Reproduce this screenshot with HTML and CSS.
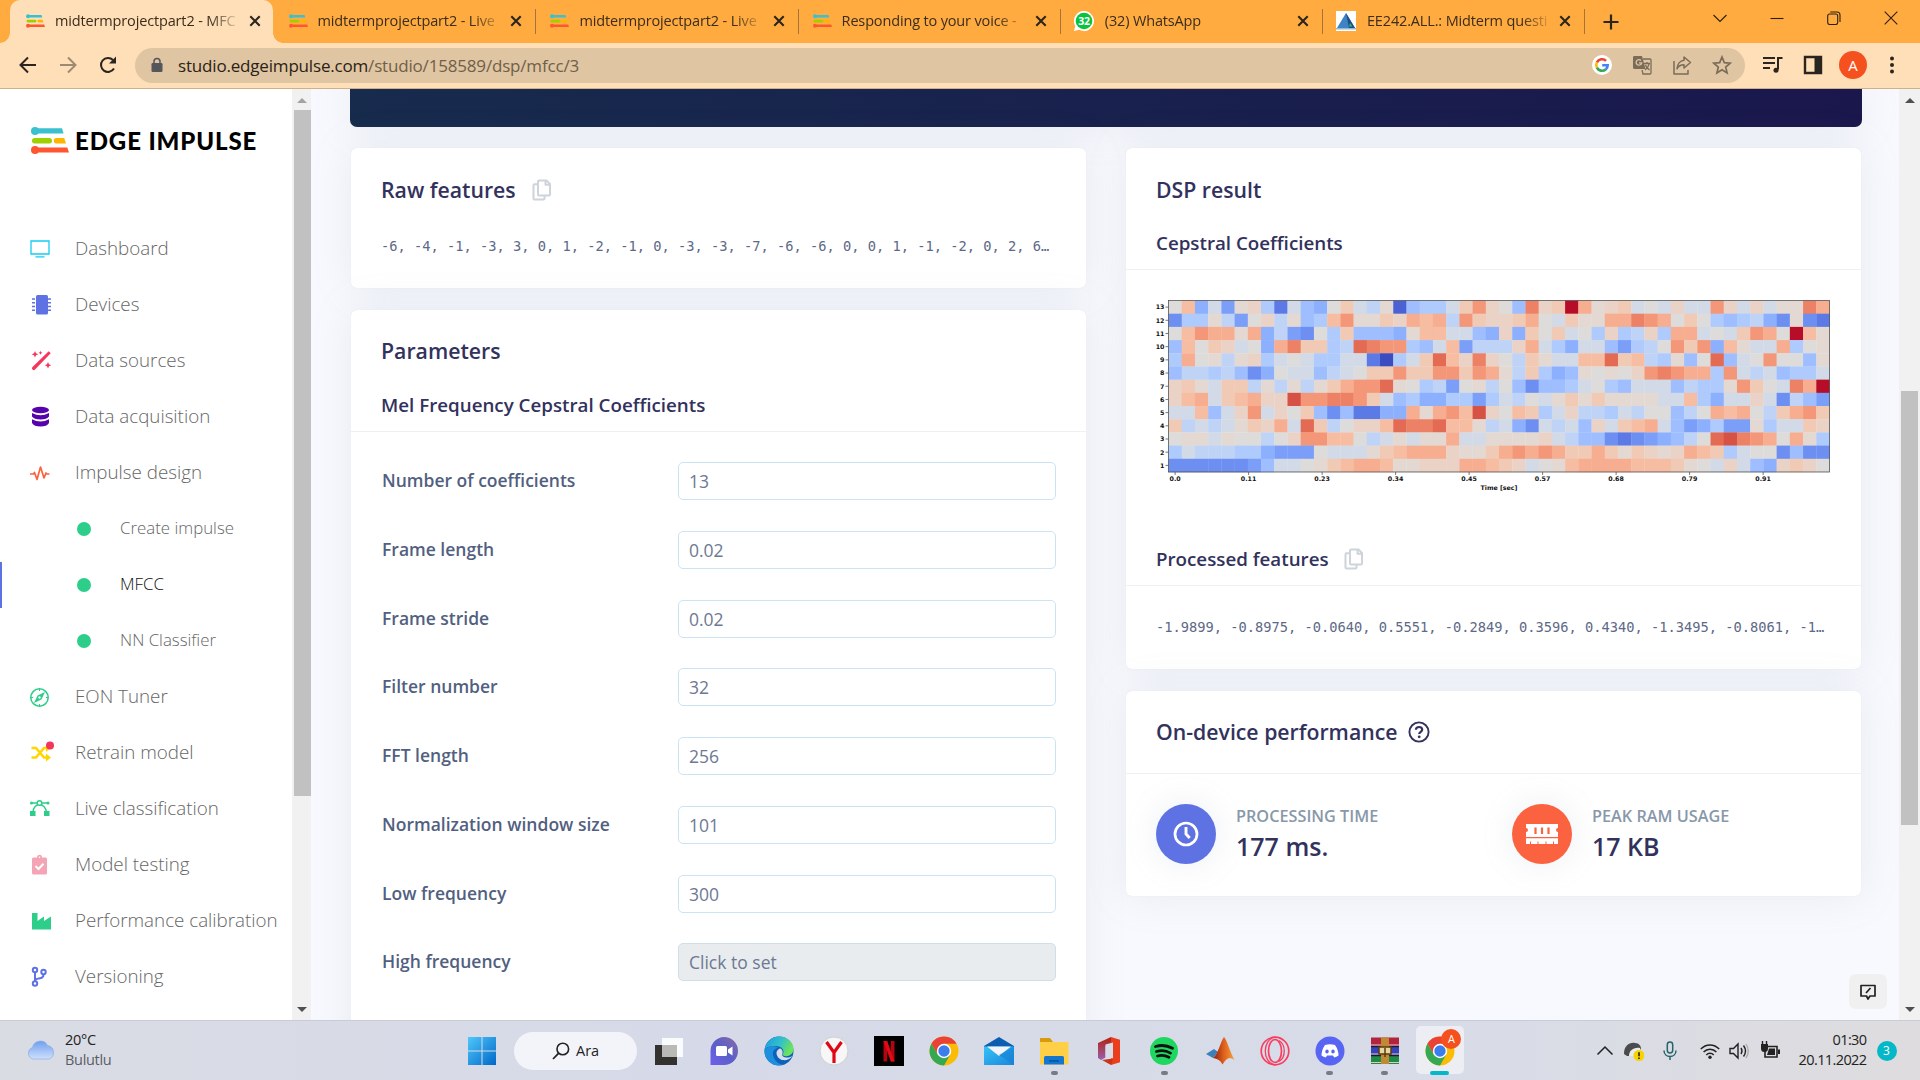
FILE: index.html
```html
<!DOCTYPE html>
<html lang="en">
<head>
<meta charset="utf-8">
<title>midtermprojectpart2 - MFCC</title>
<link rel="stylesheet" href="styles.css">
</head>
<body>
<svg class="defs" aria-hidden="true">
  <defs>
    <linearGradient id="gWin" x1="0" y1="0" x2="1" y2="1"><stop offset="0" stop-color="#4fc8fb"/><stop offset="1" stop-color="#0067c8"/></linearGradient>
    <linearGradient id="gCloud" x1="0" y1="0" x2="0" y2="1"><stop offset="0" stop-color="#6f9ff0"/><stop offset="1" stop-color="#cfe0fb"/></linearGradient>
    <linearGradient id="gTeams" x1="1" y1="0" x2="0" y2="1"><stop offset="0" stop-color="#8a6aa8"/><stop offset=".5" stop-color="#5b5fc7"/><stop offset="1" stop-color="#6f5ff0"/></linearGradient>
    <linearGradient id="gEdge" x1="0" y1="0" x2="1" y2=".4"><stop offset="0" stop-color="#1a9be0"/><stop offset=".6" stop-color="#35c1c9"/><stop offset="1" stop-color="#6be35a"/></linearGradient>
    <linearGradient id="gMat" x1="0" y1="0" x2="1" y2="0"><stop offset="0" stop-color="#8a1f0c"/><stop offset=".5" stop-color="#e0601c"/><stop offset="1" stop-color="#f3a33a"/></linearGradient>
    <linearGradient id="gMail" x1="0" y1="0" x2="1" y2="1"><stop offset="0" stop-color="#35c3f5"/><stop offset="1" stop-color="#1a86dd"/></linearGradient>
    <linearGradient id="gOff" x1="0" y1="0" x2="0" y2="1"><stop offset="0" stop-color="#b3210c"/><stop offset="1" stop-color="#9a5fae"/></linearGradient>
  </defs>
  <symbol id="ei" viewBox="0 0 38 27">
    <path fill="#3ac0cf" d="M4 1.300h27l1.600 5.300H4z"/><circle fill="#3ac0cf" cx="4" cy="4" r="4"/>
    <rect fill="#9fd000" x="1" y="11" width="20" height="5.400" rx="2.700"/><path fill="#ffb400" d="M25.500 11h7.700l1.800 5.400h-9.500a2.700 2.700 0 0 1 0-5.400z"/>
    <path fill="#ff5630" d="M4 20.400h32.300l1.700 5H4z"/><circle fill="#ff5630" cx="4" cy="23" r="4"/>
  </symbol>
  <symbol id="x" viewBox="0 0 12 12"><path d="M1.300 1.300l9.400 9.400M10.700 1.300l-9.400 9.400" stroke="#2b2520" stroke-width="2.100"/></symbol>
  <symbol id="copy" viewBox="0 0 20 22"><path fill="none" stroke="#ced4da" stroke-width="2" stroke-linejoin="round" d="M7 1.500h7.500L18 5v10.500a1 1 0 0 1-1 1H7a1 1 0 0 1-1-1v-13a1 1 0 0 1 1-1zM13.500 1.500v4.300H18M6 5.200H2.500a1 1 0 0 0-1 1v13.300a1 1 0 0 0 1 1h9a1 1 0 0 0 1-1v-3"/></symbol>
  <symbol id="chrome" viewBox="0 0 30 30"><circle cx="15" cy="15" r="14.500" fill="#fbbc05"/><path fill="#ea4335" d="M2.400 7.800A14.500 14.500 0 0 1 27.600 7.800H15l-6.300 10.800z"/><path fill="#34a853" d="M2.400 7.800L8.700 18.600 15 22l6.300-3.400L15 29.500A14.500 14.500 0 0 1 2.400 7.800z"/><circle cx="15" cy="15" r="7.200" fill="#fff"/><circle cx="15" cy="15" r="5.700" fill="#3b7ded"/></symbol>
</svg>

<header class="tabs">
  <div class="tab active"><svg class="fav"><use href="#ei"/></svg><span class="ttl">midtermprojectpart2 - MFC</span><svg class="cls"><use href="#x"/></svg></div>
  <div class="tab"><svg class="fav"><use href="#ei"/></svg><span class="ttl">midtermprojectpart2 - Live</span><svg class="cls"><use href="#x"/></svg></div>
  <div class="tab sep"><svg class="fav"><use href="#ei"/></svg><span class="ttl">midtermprojectpart2 - Live</span><svg class="cls"><use href="#x"/></svg></div>
  <div class="tab sep"><svg class="fav"><use href="#ei"/></svg><span class="ttl">Responding to your voice -</span><svg class="cls"><use href="#x"/></svg></div>
  <div class="tab sep"><svg class="fav tall" viewBox="0 0 20 20"><path fill="#fff" d="M10 0a10 10 0 1 1-4.800 18.800L0 20l1.300-5A10 10 0 0 1 10 0z"/><circle cx="10" cy="10" r="8.300" fill="#09c340"/><text x="10" y="13.700" text-anchor="middle" font-size="10.500" font-weight="700" fill="#fff">32</text></svg><span class="ttl">(32) WhatsApp</span><svg class="cls"><use href="#x"/></svg></div>
  <div class="tab sep"><svg class="fav tall" viewBox="0 0 20 20"><path fill="#fff" d="M0 0h20v20H0z"/><path fill="#3e83c3" d="M10 2l9 15H1z"/><path fill="#1d4e8a" d="M10 2l9 15h-6z"/><path fill="#8fb8dc" d="M0 17h20v1.500H0z"/><path fill="#35b36a" d="M14 12l2.500 3.500H13z"/></svg><span class="ttl">EE242.ALL.: Midterm questi</span><svg class="cls"><use href="#x"/></svg></div>
  <div class="newtab"><svg width="16" height="16" viewBox="0 0 16 16"><path d="M8 .5v15M.5 8h15" stroke="#2b2520" stroke-width="2.200"/></svg></div>
  <div class="wins">
    <svg viewBox="0 0 14 14"><path d="M.5 4L7 10.500 13.500 4"/></svg>
    <svg viewBox="0 0 14 14"><path d="M.5 7.500h13"/></svg>
    <svg viewBox="0 0 14 14"><rect x=".7" y="3" width="10" height="10.500" rx="2"/><path d="M3.300 1h6.700a3 3 0 0 1 3 3v7"/></svg>
    <svg viewBox="0 0 14 14"><path d="M.7.700l12.600 12.600M13.300.700L.7 13.300"/></svg>
  </div>
</header>

<div class="toolbar">
  <div class="nav3">
    <svg viewBox="0 0 20 20"><path d="M18 10H3M10 2.500L2.500 10l7.500 7.500"/></svg>
    <svg viewBox="0 0 20 20" class="dim"><path d="M2 10h15M10 2.500l7.500 7.500-7.500 7.500"/></svg>
    <svg viewBox="0 0 20 20"><path d="M16 13.500a7 7 0 1 1-1-8.500"/><path d="M18 1.500v7h-7z" fill="#2b2520" stroke="none"/></svg>
  </div>
  <div class="omni">
    <svg class="lock" viewBox="0 0 12 15"><rect x=".5" y="5.500" width="11" height="9" rx="1.300" fill="#55565a"/><path d="M3 6V4a3 3 0 0 1 6 0v2" fill="none" stroke="#55565a" stroke-width="1.500"/></svg>
    <span class="url">studio.edgeimpulse.com<span>/studio/158589/dsp/mfcc/3</span></span>
    <div class="oi">
      <svg viewBox="0 0 20 20"><circle cx="10" cy="10" r="10" fill="#fff"/><g fill="none" stroke-width="2.600"><path stroke="#ea4335" d="M4.900 7.400A5.700 5.700 0 0 1 14 5.900"/><path stroke="#fbbc05" d="M4.900 12.600a5.700 5.700 0 0 1 0-5.200"/><path stroke="#34a853" d="M13.700 14.400a5.700 5.700 0 0 1-8.800-1.800"/><path stroke="#4285f4" d="M10.200 10.200h5.500a5.700 5.700 0 0 1-2 4.200"/></g></svg>
      <svg viewBox="0 0 20 20"><path fill="#7b6c5a" d="M2 1h8l3.500 13H2.500A1.500 1.500 0 0 1 1 12.500v-10A1.500 1.500 0 0 1 2 1z"/><path fill="none" stroke="#7b6c5a" stroke-width="1.300" d="M11 4h7a1 1 0 0 1 1 1v13a1 1 0 0 1-1 1h-7l-1-4M12 8.500h6M15 7v1.500M17 9c-.5 3-2.500 5-4 6M13.500 10c.5 2 2.500 4 4 5"/><path fill="none" stroke="#dfc5a1" stroke-width="1.300" d="M9 5.500a2.800 2.800 0 1 0 .7 2.300H7"/></svg>
      <svg viewBox="0 0 20 20"><path fill="none" stroke="#7b6c5a" stroke-width="1.500" stroke-linejoin="round" d="M2 6v13h14v-4M12 2l6.500 5.500L12 13v-3.200c-3 0-5.500 1-7 4 .3-4.500 3-8 7-8.500z"/></svg>
      <svg viewBox="0 0 20 20"><path fill="none" stroke="#7b6c5a" stroke-width="1.700" d="M10 2l2.300 5.600 6 .5-4.600 4 1.400 5.900-5.100-3.200L4.900 18l1.400-5.900-4.600-4 6-.5z"/></svg>
    </div>
  </div>
  <div class="ext">
    <svg viewBox="0 0 20 20"><path d="M0 3h12M0 8h12M0 13h7" stroke-width="2"/><path d="M15 14.500V3h4.500" stroke-width="2"/><circle cx="13" cy="15.200" r="2.500" fill="#2b2520" stroke="none"/></svg>
    <svg viewBox="0 0 20 20"><path d="M2 2h16v16H2z" stroke-width="2.400"/><path d="M12 2h6v16h-6z" fill="#2b2520"/></svg>
    <span class="ava">A</span>
    <svg viewBox="0 0 20 20"><g fill="#2b2520" stroke="none"><circle cx="10" cy="3.500" r="2"/><circle cx="10" cy="10" r="2"/><circle cx="10" cy="16.500" r="2"/></g></svg>
  </div>
</div>

<div class="page">
  <aside class="side">
    <div class="brand"><svg><use href="#ei"/></svg><span>EDGE IMPULSE</span></div>
    <nav>
      <a><svg viewBox="0 0 22 22"><path fill="none" stroke="#11cdef" stroke-width="1.300" d="M1 3h18v13H1zM5.500 18.800h9"/></svg>Dashboard</a>
      <a><svg viewBox="0 0 22 22"><rect x="6" y="1" width="12" height="19.500" rx="1.500" fill="#5e72e4"/><path stroke="#5e72e4" stroke-width="1.500" stroke-dasharray="3 13 3" d="M2 5h19M2 8.800h19M2 12.500h19M2 16.300h19"/></svg>Devices</a>
      <a><svg viewBox="0 0 22 22"><path fill="#f5365c" d="M18.700 1.300l2 2L5 19.500a1.500 1.500 0 0 1-2.500-2.500zM5 1l1 2.300L8.300 4.300 6 5.200 5 7.500 4 5.200 1.700 4.300 4 3.300zM10.500.800l.6 1.400 1.400.6-1.400.6-.6 1.400-.6-1.400-1.400-.6 1.400-.6zM18 12l1 2.200 2.200 1-2.200 1L18 18.400l-1-2.200-2.200-1 2.200-1z"/></svg>Data sources</a>
      <a><svg viewBox="0 0 22 22"><g fill="#5603ad"><ellipse cx="10.500" cy="4" rx="8.500" ry="3.200"/><path d="M2 7q8.500 4.500 17 0v3.500q-2 3-8.500 3T2 10.500zM2 13.200q8.500 4.500 17 0V17q-2 3.500-8.500 3.500T2 17z"/></g></svg>Data acquisition</a>
      <a><svg viewBox="0 0 22 22"><path fill="none" stroke="#fb6340" stroke-width="1.700" stroke-linejoin="round" d="M0 12h3.500l1-1.500 2.500 7L10.500 5l3.500 11 2-5 1 1h2.500"/></svg>Impulse design</a>
      <a class="sub"><i></i>Create impulse</a>
      <a class="sub on"><i></i>MFCC</a>
      <a class="sub"><i></i>NN Classifier</a>
      <a><svg viewBox="0 0 22 22"><circle cx="9.500" cy="11.500" r="8.700" fill="none" stroke="#2dce89" stroke-width="1.500"/><path fill="#2dce89" d="M15 6l-3.500 7.500L4 17l3.500-7.500zM9 2.500h1V5H9zM9 18h1v2.500H9zM.7 11h2.500v1H.7zM16 11h2.500v1H16z"/><circle cx="9.500" cy="11.500" r="1.200" fill="#fff"/></svg>EON Tuner</a>
      <a><svg viewBox="0 0 22 22" class="over"><path fill="none" stroke="#ffd600" stroke-width="2.600" d="M1.500 6h4.500l8 9.500h4M1.500 15.500H6l8-9.500h4"/><path fill="#ffd600" d="M16 11.500l5 4-5 4zM16 2l5 4-5 4z"/><circle cx="20" cy="3.500" r="4" fill="#f5365c"/></svg>Retrain model</a>
      <a><svg viewBox="0 0 22 22"><g fill="none" stroke="#2dce89" stroke-width="1.400"><path d="M1 5h18M3 14c0-4 3-7.500 6.500-7.500S16 10 16.500 14"/><circle cx="9.500" cy="5" r="2.300" fill="#fff"/></g><g fill="#2dce89"><path d="M0 13h5.500v5H0zM14 13h5.500v5H14z"/><circle cx="1.500" cy="5" r="1.500"/><circle cx="18" cy="5" r="1.500"/></g></svg>Live classification</a>
      <a><svg viewBox="0 0 22 22"><rect x="2" y="3.500" width="15" height="17" rx="1.500" fill="#f3a4b5"/><circle cx="9.500" cy="3.300" r="2.500" fill="#f3a4b5"/><circle cx="9.500" cy="3.300" r=".8" fill="#fff"/><path fill="none" stroke="#fff" stroke-width="2" d="M5.500 12l3 3 5-5.300"/></svg>Model testing</a>
      <a><svg viewBox="0 0 22 22"><path fill="#2dce89" d="M2 3h5.500v8L14 6.500v4.500L21 6.500V19.500H2z"/></svg>Performance calibration</a>
      <a><svg viewBox="0 0 22 22"><g fill="none" stroke="#5e72e4" stroke-width="2"><circle cx="5" cy="4" r="2.200"/><circle cx="5" cy="17.500" r="2.200"/><circle cx="13.500" cy="6" r="2.200"/><path d="M5 6v9.500M13.500 8.300q0 3.500-3.500 4t-5 1.500"/></g></svg>Versioning</a>
    </nav>
  </aside>
  <div class="bar sidebar-bar"><b class="up"></b><div class="thumb"></div><b class="down"></b></div>

  <main>
    <div class="banner"></div>
    <div class="cols">
      <div class="col">
        <section class="card raw">
          <h3>Raw features <svg><use href="#copy"/></svg></h3>
          <p class="mono">-6, -4, -1, -3, 3, 0, 1, -2, -1, 0, -3, -3, -7, -6, -6, 0, 0, 1, -1, -2, 0, 2, 6…</p>
        </section>
        <section class="card params">
          <h3>Parameters</h3>
          <h4>Mel Frequency Cepstral Coefficients</h4>
          <div class="form">
            <label>Number of coefficients<span>13</span></label>
            <label>Frame length<span>0.02</span></label>
            <label>Frame stride<span>0.02</span></label>
            <label>Filter number<span>32</span></label>
            <label>FFT length<span>256</span></label>
            <label>Normalization window size<span>101</span></label>
            <label>Low frequency<span>300</span></label>
            <label>High frequency<span class="off">Click to set</span></label>
          </div>
        </section>
      </div>
      <div class="col">
        <section class="card dsp">
          <h3>DSP result</h3>
          <h4>Cepstral Coefficients</h4>
          <svg class="plot" id="plot" width="735" height="274" viewBox="0 0 735 274"></svg>
          <h4 class="pf">Processed features <svg><use href="#copy"/></svg></h4>
          <p class="mono">-1.9899, -0.8975, -0.0640, 0.5551, -0.2849, 0.3596, 0.4340, -1.3495, -0.8061, -1…</p>
        </section>
        <section class="card perf">
          <h3>On-device performance <svg class="q" viewBox="0 0 22 22"><circle cx="11" cy="11" r="9.600" fill="none" stroke="#32325d" stroke-width="1.900"/><path fill="none" stroke="#32325d" stroke-width="2.200" d="M7.900 8.700c.2-3.600 6.300-3.600 6.300 0 0 2.100-3 2.100-3 4.300"/><circle cx="11.200" cy="15.800" r="1.400" fill="#32325d"/></svg></h3>
          <div class="stats">
            <div class="stat"><span class="ic blue"><svg viewBox="0 0 26 26"><circle cx="13" cy="13" r="11" fill="none" stroke="#fff" stroke-width="2.700"/><path fill="none" stroke="#fff" stroke-width="2.900" d="M13 6V13l3.700 4"/></svg></span><div><small>PROCESSING TIME</small><strong>177 ms.</strong></div></div>
            <div class="stat"><span class="ic red"><svg viewBox="0 0 32 20" class="ram"><path fill="#fff" d="M0 0h32v4a2 2 0 0 0 0 4v5H0V8a2 2 0 0 0 0-4zM0 14.300h32V20H0z"/><path stroke="#fb6340" stroke-width="2.200" d="M9.500 3.500v6.500M16 3.500v6.500M22.500 3.500v6.500"/><path stroke="#fb6340" stroke-width="1" d="M4.500 17.500V20M12 17.500V20M20 17.500V20M27.500 17.500V20"/></svg></span><div><small>PEAK RAM USAGE</small><strong>17 KB</strong></div></div>
          </div>
        </section>
      </div>
    </div>
    <div class="fb"><svg viewBox="0 0 18 18" width="18" height="18"><path fill="none" stroke="#222" stroke-width="1.700" stroke-linejoin="round" d="M2 2.500h14v10.500h-5L9 16l-1.500-3H2z"/><path stroke="#222" stroke-width="1.700" d="M7 10l4.500-5"/></svg></div>
  </main>
  <div class="bar main-bar"><b class="up"></b><div class="thumb"></div><b class="down"></b></div>
</div>

<footer class="task">
  <div class="weather"><svg viewBox="0 0 30 22"><path fill="url(#gCloud)" stroke="#7fa6ea" stroke-width=".6" d="M7 21a6 6 0 0 1-.5-11.500 8 8 0 0 1 15-2A7 7 0 0 1 23 21z"/></svg><div>20°C<em>Bulutlu</em></div></div>
  <div class="apps">
    <div class="app"><svg viewBox="0 0 30 30"><path fill="url(#gWin)" d="M1 1h13.500v13.500H1zM15.500 1H29v13.500H15.500zM1 15.500h13.500V29H1zM15.500 15.500H29V29H15.500z"/></svg></div>
    <div class="find"><div><svg viewBox="0 0 18 18"><circle cx="10.800" cy="7" r="5.800" fill="none" stroke="#222" stroke-width="1.600"/><path d="M6.500 11.300L1 17" stroke="#222" stroke-width="1.800"/></svg>Ara</div></div>
    <div class="app"><svg viewBox="0 0 30 30"><path fill="#33322f" d="M1 9h22v20H1z"/><path fill="#fff" fill-opacity=".88" d="M8 2h21v19H8z"/><path fill="#b9b9b6" d="M8 9h15v12H8z"/></svg></div>
    <div class="app"><svg viewBox="0 0 30 30"><path fill="url(#gTeams)" d="M15 1a14 14 0 0 1 0 28H1.500V15A14 14 0 0 1 15 1z"/><rect x="7" y="10" width="11" height="10" rx="1.500" fill="#fff"/><path fill="#fff" d="M19 13.500l4.500-3v9l-4.500-3z"/></svg></div>
    <div class="app"><svg viewBox="0 0 30 30"><circle cx="15" cy="15" r="14.500" fill="#0c62ba"/><path fill="url(#gEdge)" d="M.7 13.500C2 5 8.500.500 15.500.500 23.500.500 29.500 6.500 29.500 13c0 6-7 9-11 6 3-5-1-9-6.500-9S2 11 .7 13.500z"/><path fill="#1d8fdd" d="M.5 14c3-4.500 10-5.500 14-2-5 0-7 5-4.500 10 2 4 5.500 6.500 9 6.500C9 32 0 24 .5 14z"/><path fill="#d9dde9" d="M12.500 17c0-2 2-4.500 4-4.500 4 3 1 6 2 7.500 3 2.500 8 1.500 10 0-3 4-7 4.500-10 4-3.500-.6-6-4-6-7z"/></svg></div>
    <div class="app"><svg viewBox="0 0 30 30"><circle cx="15" cy="15" r="14" fill="#f7f7f7" stroke="#d0d0d0"/><path fill="none" stroke="#e10613" stroke-width="3.200" d="M7.500 6L15 16.500 22.500 6M15 15.500V27"/></svg></div>
    <div class="app"><svg viewBox="0 0 30 30"><path d="M0 0h30v30H0z"/><path fill="#b1060f" d="M9.500 5h3.700v20.500H9.500zM16.800 5h3.700v20.500h-3.700z"/><path fill="#e50914" d="M9.500 5h3.700l7.300 20.500h-3.700z"/></svg></div>
    <div class="app"><svg><use href="#chrome"/></svg></div>
    <div class="app"><svg viewBox="0 0 30 30"><path fill="#0c5fb0" d="M0 10L15 1l15 9v3H0z"/><path fill="url(#gMail)" d="M0 10.500h30V29H0z"/><path fill="#f1f4f8" d="M3 10.500h24L15 20z"/><path fill="#1580d6" d="M30 10.500V29L15 19z" opacity=".6"/></svg></div>
    <div class="app run"><svg viewBox="0 0 30 30"><path fill="#d99a0b" d="M1 2h10l3 4H1z"/><path fill="#ffcf48" d="M1 6h28.500v22.500H1z"/><path fill="#1576d0" d="M5 21.500q0-1.500 1.500-1.500h17q1.500 0 1.500 1.500v7H5z"/><path fill="#0b57a4" d="M10 24h10v1.800H10z"/></svg></div>
    <div class="app"><svg viewBox="0 0 30 30"><path fill="url(#gOff)" d="M4 7L17 1v7l-5.500 2v11.500L7 24l-3-2z"/><path fill="#ea3e1c" d="M17 1l9 2.700v22.600L17 29z"/><path fill="#d8dce8" d="M11.500 8.500L19 6.500v16l-7.500-1z"/><path fill="#c9351a" d="M8 24l11-1.500L17 29z"/></svg></div>
    <div class="app run"><svg viewBox="0 0 30 30"><circle cx="15" cy="15" r="14" fill="#1ed760"/><path fill="none" stroke="#111" stroke-width="2.800" stroke-linecap="round" d="M6.500 10.500c6-1.800 12-1 17 1.800M7.500 15.500c5-1.400 10-.8 14 1.600M8.500 20c4-1 8-.5 11.500 1.300"/></svg></div>
    <div class="app"><svg viewBox="0 0 30 30"><path fill="#3d7fb8" d="M1 18l8-5 4 3-5 6z"/><path fill="url(#gMat)" d="M8 22c5-3 8-18 11-21 3 3 6 15 10.500 23-5-4-8-2-12 4.500-2-4-5-6-9.500-6.500z"/></svg></div>
    <div class="app"><svg viewBox="0 0 30 30"><g fill="none" stroke="#fa3c5f"><circle cx="15" cy="15" r="13.800" stroke-width="1.700"/><ellipse cx="15" cy="15" rx="6.500" ry="11.500" stroke-width="1.700"/><path d="M15 1.200c-13 2-13 25.600 0 27.600" stroke-width="1.300"/><path d="M19 4.500c7 4 7 17 0 21" stroke-width="1.300"/></g></svg></div>
    <div class="app run"><svg viewBox="0 0 30 30"><circle cx="15" cy="15" r="14.500" fill="#5865f2"/><path fill="#fff" d="M10 9q5-1.500 10 0 3.500 5 3.500 10.500-2 1.500-4.300 2l-1.200-2h-6l-1.200 2q-2.300-.5-4.300-2Q6.500 14 10 9z"/><ellipse cx="12" cy="15.500" rx="1.700" ry="2" fill="#5865f2"/><ellipse cx="18" cy="15.500" rx="1.700" ry="2" fill="#5865f2"/></svg></div>
    <div class="app run"><svg viewBox="0 0 30 30"><path fill="#b3243c" d="M1 1.500h28v9H1z"/><path fill="#3542b8" d="M1 10.500h28v9H1z"/><path fill="#218a46" d="M1 19.500h28v8.500H1z"/><path stroke="#1c1c30" stroke-width="1.300" d="M1 10.500h28M1 19.500h28"/><path stroke="#e5c9c9" stroke-width="1" d="M1 9h28M1 18h28M1 26.500h28"/><path fill="#c08a35" d="M11 1.500h8V28h-8z"/><rect x="9" y="11" width="12" height="7" fill="#e8d79c" stroke="#5b3a10" stroke-width="1.500"/><path stroke="#5b3a10" stroke-width="1.500" d="M15 12v9"/></svg></div>
    <div class="app cur"><svg><use href="#chrome"/></svg><span>A</span></div>
  </div>
  <div class="tray">
    <svg class="t1" viewBox="0 0 20 20"><path d="M2.500 13.500L10 6l7.500 7.500" stroke-width="1.500"/></svg>
    <svg class="t2" viewBox="0 0 20 20"><path fill="#4b4b4d" stroke="none" d="M0 13C0 4 6 1 11 2c4 0 6 3 6 6L9 15H3z"/><path fill="#e9e9ee" stroke="none" d="M5 15c0-5 4-9 11-8l1 4-6 4z"/><circle cx="15" cy="14.500" r="5.500" fill="#f9d300" stroke="none"/><path d="M15 11.200v4M15 16.500v1.500" stroke-width="1.600"/></svg>
    <svg class="t3" viewBox="0 0 20 20"><g stroke="#25646c" stroke-width="1.500"><rect x="7.300" y="1" width="5.400" height="11" rx="2.700"/><path d="M4 9.500c0 8 12 8 12 0M10 15.500V19"/></g></svg>
    <svg class="t4" viewBox="0 0 20 20"><g stroke-width="1.500"><path d="M.8 8C6 2.500 14 2.500 19.200 8M3.600 11c3.500-3.700 9.300-3.700 12.800 0M6.300 14c2-2.200 5.400-2.200 7.400 0"/></g><circle cx="10" cy="16.300" r="1.700" fill="#222" stroke="none"/></svg>
    <svg class="t5" viewBox="0 0 20 20"><path stroke-width="1.400" d="M1 7.500h3.500L9 3v14l-4.500-4.500H1zM12 7q2 3 0 6M14.500 4.500q4 5.500 0 11"/><path stroke="#aaa" stroke-width="1.300" d="M17 3q4.500 7 0 14"/></svg>
    <svg class="t6" viewBox="0 0 20 20"><path stroke-width="1.600" d="M8 5.500h9v10.500H5V10"/><path fill="#222" stroke="none" d="M1 3h7v4.500a3.500 3.500 0 0 1-7 0zM9 7.500h6v6.500H7zM18 8.500h2v4.500h-2z"/><path stroke-width="1.400" d="M2.500 3V0M6.500 3V0"/></svg>
    <div class="clock">01:30<br>20.11.2022</div>
    <span class="note">3</span>
  </div>
</footer>
<script src="plot.js"></script>
</body>
</html>
```
FILE: styles.css
```css
* { box-sizing: border-box; }
body { margin: 0; width: 1920px; height: 1080px; overflow: hidden; font-family: "Open Sans", "Noto Sans", sans-serif; display: flex; flex-direction: column; background: #f8f9fe; }
.defs { position: absolute; width: 0; height: 0; }
svg { display: block; flex: none; }
h3, h4, p { margin: 0; }

.tabs { height: 43px; background: #ffab40; display: flex; padding-left: 10px; flex: none; }
.tab { width: 262.2px; height: 43px; display: flex; align-items: center; padding: 0 12px 2px 16px; position: relative; font-size: 14.500px; letter-spacing: -0.150px; color: #3b2d1c; }
.tab.active { background: #ffdfb8; border-radius: 10px 10px 0 0; width: 263px; }
.tab.active + .tab { width: 261.4px; padding-left: 15.500px; }
.tab.active::after, .tab.active::before { content: ""; position: absolute; bottom: 0; width: 10px; height: 10px; right: -10px; background: radial-gradient(circle at 10px 0, #ffab40 9.500px, #ffdfb8 10px); }
.tab.active::before { right: auto; left: -10px; background: radial-gradient(circle at 0 0, #ffab40 9.500px, #ffdfb8 10px); }
.tab.sep::before, .newtab::before { content: ""; position: absolute; left: 1px; top: 9px; width: 1px; height: 25px; background: #a5743a; }
.fav { width: 19px; height: 14px; margin-right: 10px; }
.fav.tall { width: 20px; height: 20px; margin-right: 11px; margin-left: -1px; }
.ttl { width: 186px; overflow: hidden; white-space: nowrap; -webkit-mask-image: linear-gradient(90deg, #000 155px, transparent 186px); mask-image: linear-gradient(90deg, #000 155px, transparent 186px); }
.cls { width: 12px; height: 12px; margin-left: auto; }
.newtab { position: relative; width: 60px; display: flex; align-items: center; padding-left: 20px; }
.wins { margin-left: auto; display: flex; gap: 43px; padding: 11px 22px 0 0; }
.wins svg { width: 14px; height: 14px; fill: none; stroke: #2b2010; stroke-width: 1.100; }

.toolbar { height: 46px; background: #ffdfb8; border-bottom: 1px solid #cfb08a; display: flex; align-items: center; padding: 0 18px 1px 18px; flex: none; }
.nav3 { display: flex; gap: 20px; width: 117px; }
.nav3 svg { width: 20px; height: 20px; fill: none; stroke: #2b2520; stroke-width: 2; }
.nav3 .dim { opacity: .45; }
.omni { width: 1610px; height: 35px; border-radius: 18px; background: #dfc5a1; display: flex; align-items: center; padding: 0 13px 0 16px; }
.lock { width: 12px; height: 16px; margin-right: 15px; }
.url { font-size: 17px; color: #2a2218; letter-spacing: -0.180px; white-space: nowrap; }
.url span { color: #6f5f4a; }
.oi { margin-left: auto; display: flex; gap: 20px; }
.oi svg { width: 20px; height: 20px; }
.ext { display: flex; align-items: center; margin-left: auto; }
.ext svg { width: 20px; height: 20px; fill: none; stroke: #2b2520; margin-right: 20px; }
.ext svg + svg { margin-right: 16px; }
.ext svg:last-child { margin: 0 0 0 15px; }
.ava { width: 28px; height: 28px; border-radius: 50%; background: #f4511e; color: #fff; font-size: 15px; line-height: 28px; text-align: center; }

.page { height: 931px; display: flex; flex: none; }
.side { width: 292px; background: #fff; overflow: hidden; }
.brand { height: 131px; display: flex; padding: 38px 0 0 31px; }
.brand svg { width: 38px; height: 27px; margin-right: 6px; }
.brand span { font: 900 24px/27px Lato, sans-serif; letter-spacing: 0.900px; color: #000; white-space: nowrap; }
.side a { height: 56px; display: flex; align-items: center; padding-left: 30px; font-size: 18.770px; font-weight: 300; color: #666; white-space: nowrap; padding-bottom: 1px; }
.side a svg { width: 22px; height: 22px; margin: 3px 23px 0 0; }
.side a svg.over { overflow: visible; }
.side a.sub { font-size: 16.850px; padding-left: 77px; }
.side a.on { position: relative; color: #111; }
.side a.on::before { content: ""; position: absolute; left: 0; top: 6px; width: 2px; height: 46px; background: #5e72e4; }
.side i { width: 14px; height: 14px; border-radius: 50%; background: #2dce89; margin: 2px 29px 0 0; }

.bar { background: #f1f1f1; width: 19px; display: flex; flex-direction: column; align-items: center; flex: none; padding: 9px 0 8px; }
.bar b { width: 0; height: 0; border: 5px solid transparent; border-top: 0; border-bottom-color: #a3a3a3; }
.bar b.down { border-top: 5px solid #505050; border-bottom: 0; margin-top: auto; }
.bar .thumb { width: 17px; background: #c1c1c1; }
.sidebar-bar .thumb { height: 686px; margin: 7px 0 0 2px; }
.main-bar { width: 21px; }
.main-bar b.up { border-bottom-color: #505050; }
.main-bar .thumb { height: 434px; margin-top: 288px; }

main { flex: 1; position: relative; overflow: hidden; background: #f8f9fe; padding-left: 39px; }
.banner { width: 1512px; height: 38px; border-radius: 0 0 7px 7px; background: linear-gradient(90deg, #172b4d 0, #1a174d 100%); box-shadow: 0 0 40px rgba(136,152,170,.15); }
.cols { display: grid; grid-template-columns: 735px 735px; gap: 40px; padding: 21px 0 0 1px; }
.col { display: flex; flex-direction: column; gap: 22px; }
.card { background: #fff; border-radius: 6px; box-shadow: 0 0 40px rgba(136,152,170,.15), 0 0 1px rgba(0,0,0,.1); color: #32325d; }
h3 { font-size: 21.250px; font-weight: 600; padding: 0 30px; line-height: 30px; display: flex; align-items: center; gap: 16px; color: #32325d; white-space: nowrap; }
h4 { font-size: 18.750px; font-weight: 600; padding: 0 30px 12px; line-height: 30px; display: flex; align-items: center; gap: 15px; border-bottom: 1px solid #eef0f2; color: #32325d; white-space: nowrap; }
h3 svg, h4 svg { width: 20px; height: 22px; }
.mono { font-family: "DejaVu Sans Mono", monospace; font-size: 13.710px; color: #5d6987; padding: 0 30px; line-height: 20px; white-space: nowrap; }
.raw { height: 140px; padding-top: 27px; }
.raw .mono { margin-top: 31px; }
.params { height: 760px; padding-top: 26px; }
.params h4 { margin-top: 25px; height: 41px; }
.form { padding: 30px 30px 0 31px; }
.form label { height: 68.750px; display: flex; justify-content: space-between; align-items: flex-start; font-size: 17.500px; font-weight: 600; color: #525f7f; line-height: 37px; white-space: nowrap; }
.form span { width: 378px; height: 38px; border: 1px solid #cbe4f3; border-radius: 5px; padding-left: 10px; line-height: 37px; font-weight: 400; color: #6d7993; background: #fff; }
.form .off { background: #e9ecef; border-color: #cfdfe8; }
.dsp { height: 521px; padding-top: 27px; }
.dsp h4 { margin-top: 24px; height: 41px; }
.dsp .pf { margin-top: 0; height: 42px; }
.dsp .mono { margin-top: 31px; }
.perf { height: 205px; padding-top: 26px; }
.perf h3 { height: 57px; padding-bottom: 27px; border-bottom: 1px solid #eef0f2; gap: 10px; }
.perf h3 .q { width: 22px; height: 22px; }
.stats { display: flex; padding: 30px 0 0 30px; }
.stat { width: 356px; flex: none; display: flex; gap: 20px; }
.stat:last-child { width: 300px; }
.ic { width: 60px; height: 60px; border-radius: 50%; display: flex; align-items: center; justify-content: center; box-shadow: 0 0 32px rgba(136,152,170,.17); }
.ic svg { width: 26px; height: 26px; }
.ic .ram { width: 32px; height: 20px; }
.blue { background: #5e72e4; }
.red { background: #fb6340; }
.stat small { display: block; font-size: 16.250px; line-height: 24px; font-weight: 600; color: #8898aa; }
.stat strong { display: block; font-size: 25px; line-height: 37px; font-weight: 600; color: #32325d; }
.fb { position: absolute; right: 12px; bottom: 11px; width: 38px; height: 35px; border-radius: 7px; background: #f0f0f0; display: flex; align-items: center; justify-content: center; }

.task { height: 60px; background: linear-gradient(90deg, #dadce4, #d6dae8 35%, #d8dce8 75%, #dedcde); border-top: 1px solid #c9cbd6; display: flex; flex: none; color: #222; }
.weather { width: 454px; display: flex; padding: 9px 0 0 26px; gap: 9px; font-size: 14.500px; line-height: 20px; letter-spacing: -0.300px; }
.weather svg { width: 30px; height: 22px; margin-top: 8px; }
.weather em { display: block; font-style: normal; color: #5a5c64; }
.apps { display: flex; align-items: center; }
.app { width: 55.100px; height: 59px; display: flex; align-items: center; justify-content: center; position: relative; }
.app svg { width: 30px; height: 30px; }
.find { width: 132px; padding: 0 4px 0 5px; }
.find div { height: 38px; border-radius: 19px; background: #f3f4f9; display: flex; align-items: center; justify-content: center; gap: 6px; font-size: 14.500px; }
.find svg { width: 18px; height: 18px; }
.run::after, .cur::after { content: ""; position: absolute; bottom: 5px; width: 7px; height: 4px; border-radius: 2px; background: #7a7b82; }
.cur::after { width: 19px; background: #05b8c8; bottom: 5px; }
.cur::before { content: ""; position: absolute; left: 4px; top: 5px; width: 48px; height: 48px; border-radius: 5px; background: #edeef4; }
.cur svg { position: relative; }
.cur span { position: absolute; left: 29px; top: 8px; width: 20px; height: 20px; border-radius: 50%; background: #f4511e; color: #fff; font-size: 11px; line-height: 20px; text-align: center; }
.tray { margin-left: auto; display: flex; align-items: center; padding-right: 23.500px; }
.tray svg { width: 20px; height: 20px; fill: none; stroke: #222; }
.t1 { margin-right: 9px; }
.t2 { margin-right: 16px; }
.t3 { margin-right: 20px; }
.t4 { margin-right: 9px; }
.t5 { margin-right: 11px; }
.clock { width: 87px; text-align: right; font-size: 14.500px; line-height: 20px; letter-spacing: -0.600px; margin: 0 10px 1px 0; }
.note { width: 20px; height: 20px; border-radius: 50%; background: #05b8c8; color: #fff; font-size: 12px; line-height: 20px; text-align: center; }
.plot text { font-family: "DejaVu Sans", sans-serif; font-size: 6.300px; font-weight: 700; fill: #111; }
```
FILE: plot.js
```js
// Cepstral coefficient heat map: one letter per cell, coefficient 13 first.
const rows = [
  "KNFJElLHCJGFKMJIlBGHHJMPLKGQLMUOlLMJKJLJJPLJLJllQO",
  "DHHlIEKLIlGHNPllMLONOIPMLLMOKJMllOOQPOKMKHGHIFDlDC",
  "KNPOOlOFIEDKHMGGGFlNNJJGFLFMKMJKHLHILHOOJKJMPOKUNl",
  "GNKMLJKFOQMMHIRQPPHGJNEIIILOJHFJJGEHIKPMPFNlJJOHKl",
  "HOKlIlLHJKJHHJJCAHJMRNLQLKIMlJJNNRMNIHlGKRGJKPKKGl",
  "GIIHIGDFKJJGIJKMMPMMPPMPOlIMHFGlKlKLPQPOOHPJIJGHHJ",
  "LMlJMMIlIlIlMOPPRlKHIEKlIKGDGGHJKHGJJJGIHHlPMKJQOU",
  "LNOJMNOLLSPPQQPMJGHFFHHEHJIKJlMlMllllJJNHFJJLJDIGE",
  "JJNGJLPJLKMGDGCCFFOlOPNSLKNMHJLIIHJIKKGIKONOKIMOPM",
  "MIJIJlMLOJRMIKLLNRQQRNNlIJFDJIJGLJMNOJGEFHEElHJJML",
  "KllJlKKIKLPPNNKIJlJllOJJllllLJIGGDCDEFGIKRSQPOKOlH",
  "HJIIIHHFEEEKJJJlMNOOOLllMOPOPOMMOMlMLlLONMHJKKDGDD",
  "DDDDDDEGJJKlMNOONllLLLOONMLJKlNOOOONNNMlKJLJGFLMLK"
];
const colors = {
  A: "#3b4cc0", B: "#4a62d3", C: "#5b7ae5", D: "#6c8ff1", E: "#7b9ff9", F: "#8db0fe", G: "#9ebeff",
  H: "#afcafc", I: "#bfd3f6", J: "#d1dae6", K: "#dddcdb", l: "#e3d9d2", L: "#ead3c6", M: "#f1cab6",
  N: "#f6bda2", O: "#f6ad90", P: "#f39778", Q: "#ec8165", R: "#e36b54", S: "#d65244", T: "#c73635", U: "#b70d28"
};
const x0 = 42.5, y0 = 30.5, w = 13.22, h = 13.19;
const W = w * 50, H = h * 13;
let out = "";
rows.forEach((r, j) => [...r].forEach((c, i) => {
  out += `<rect x="${x0 + i * w}" y="${y0 + j * h}" width="${w + 0.3}" height="${h + 0.3}" fill="${colors[c]}"/>`;
}));
rows.forEach((r, j) => {
  const y = y0 + (j + 0.5) * h;
  out += `<path d="M${x0 - 3} ${y}h3" stroke="#555" stroke-width=".8"/><text x="${x0 - 4}" y="${y + 2.4}" text-anchor="end">${13 - j}</text>`;
});
["0.0", "0.11", "0.23", "0.34", "0.45", "0.57", "0.68", "0.79", "0.91"].forEach((t, k) => {
  const x = x0 + w / 2 + k * 73.5;
  out += `<path d="M${x} ${y0 + H}v3" stroke="#555" stroke-width=".8"/><text x="${x}" y="${y0 + H + 9}" text-anchor="middle">${t}</text>`;
});
out += `<text x="${x0 + W / 2}" y="${y0 + H + 18}" text-anchor="middle">Time [sec]</text>`;
out += `<rect x="${x0}" y="${y0}" width="${W}" height="${H}" fill="none" stroke="#555" stroke-width=".8"/>`;
document.getElementById("plot").innerHTML = out;
```
